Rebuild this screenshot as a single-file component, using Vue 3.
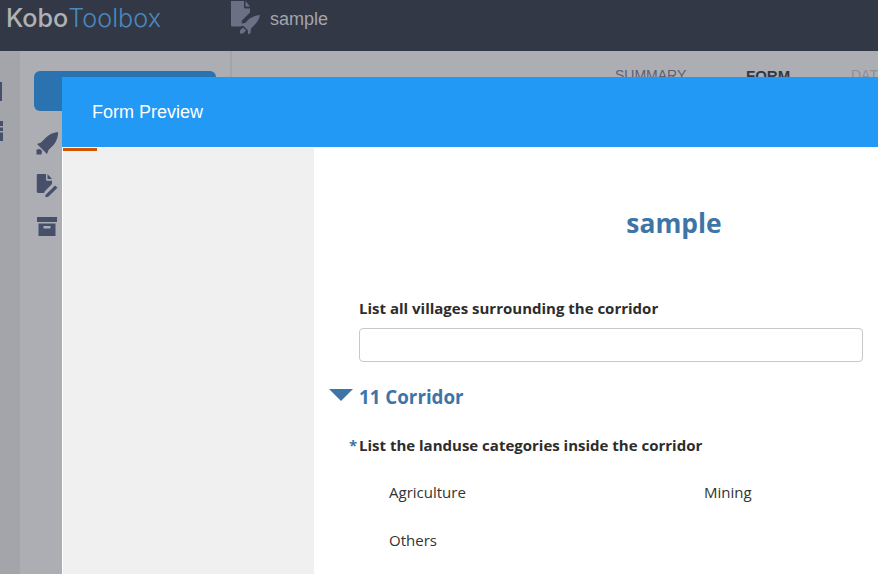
<script setup>
const sideIcons = ['rocket', 'draft', 'archive']
const options = [['Agriculture', 'Mining'], ['Others']]
</script>

<template>
  <div class="page">
    <header class="topbar">
      <div class="logo"><span class="kobo">Kobo</span><span class="toolbox">Toolbox</span></div>
      <div class="asset">
        <svg class="asset-icon" width="32" height="36" viewBox="0 0 32 36">
          <path d="M1 0h13v6c0 1 .6 1.600 1.600 1.600H20v4l-8 8-1 6H2.600C1.500 25.600 1 25 1 24z" fill="#6b7085" />
          <path d="M15.500 0 20 5.500h-4.500z" fill="#6b7085" />
          <path d="M30 14c-5 .5-9 2-12 5l-3 3-4 .5-1.500 2.500h4l4.500 4.500v4l2.500-1.500.5-4.500 3.500-3.500c3-3 4.500-5.500 5.500-10z" fill="#6b7085" />
          <path d="M10 29.500l3-3 3 3-3 3h-3z" fill="#6b7085" />
        </svg>
        <span class="asset-name">sample</span>
      </div>
    </header>

    <div class="behind">
      <aside class="rail">
        <span class="rail-mark first"></span>
        <svg class="rail-list" width="3" height="20" viewBox="0 0 3 20">
          <path d="M0 0h3v20H0zM0 5h3v1.500H0zM0 10h3v1.500H0z" fill="#47506b" fill-rule="evenodd" />
        </svg>
      </aside>
      <aside class="side">
        <div class="new-btn"></div>
        <svg class="side-icon" v-for="icon in sideIcons" :key="icon" width="24" height="24" viewBox="0 0 24 24">
          <template v-if="icon === 'rocket'">
            <path d="M23 1c-5 .6-9 2.500-12 5.500L6 11.500 2 13l3 3 4 4 3 3 1.500-4 5-5c3-3 4.900-9 4.500-13z" fill="#47506b" />
            <path d="M1.500 18.500 5 18l2 2-.5 3.500h-5z" fill="#47506b" />
          </template>
          <template v-else-if="icon === 'draft'">
            <path d="M2 1h9v5.500c0 .8.500 1.200 1.200 1.200H17V11l-7 7-1 2H3c-.7 0-1.200-.5-1.200-1.200V2C1.800 1.400 2.300 1 3 1z M12.500 1 17 6h-4.500z" fill="#47506b" />
            <path d="M20 12.500l2.500 2.300L13 24l-3 .8.700-3z" fill="#47506b" />
          </template>
          <template v-else>
            <path d="M2 2h20v5H2zM3.500 8.500h17V21h-17zM8.500 11v2.500h7V11z" fill="#47506b" fill-rule="evenodd" />
          </template>
        </svg>
      </aside>
      <main class="tabs">
        <span class="tab t1">SUMMARY</span>
        <span class="tab t2">FORM</span>
        <span class="tab t3">DATA</span>
      </main>
    </div>

    <section class="modal">
      <div class="modal-head">Form Preview</div>
      <div class="modal-body">
        <div class="nav-pane"><div class="progress"></div></div>
        <form class="form" @submit.prevent>
          <h1 class="form-title">sample</h1>
          <label class="q-label">List all villages surrounding the corridor</label>
          <input class="q-input" type="text" />
          <h2 class="group"><span class="caret"></span>11 Corridor</h2>
          <div class="q-label req"><span class="star">*</span>List the landuse categories inside the corridor</div>
          <div class="opts">
            <div class="opt-row" v-for="(row, i) in options" :key="i">
              <span class="opt" v-for="o in row" :key="o">{{ o }}</span>
            </div>
          </div>
        </form>
      </div>
    </section>
  </div>
</template>

<style>
html, body { margin: 0; overflow: hidden; }
</style>

<style scoped>
.page {
  position: relative;
  width: 878px;
  height: 574px;
  overflow: hidden;
  background: #adaeb3;
  font-family: "Liberation Sans", Arial, sans-serif;
}
.topbar {
  height: 51px;
  background: #333846;
  display: flex;
  align-items: center;
  padding-left: 6px;
  box-sizing: border-box;
}
.logo {
  width: 224px;
  flex: none;
  font-family: Inter, sans-serif;
  font-size: 25.200px;
  font-weight: 300;
  margin-top: -15px;
}
.kobo { color: #b0b1b5; font-weight: 500; }
.toolbox { color: #4a88bd; }
.asset { display: flex; align-items: center; height: 51px; margin-top: -12px; }
.asset-icon { margin-right: 8px; margin-top: -2px; }
.asset-name { color: #a3a5ac; font-size: 18px; }
.behind { display: flex; height: 523px; }
.rail {
  width: 20px;
  flex: none;
  background: #a3a5ab;
  position: relative;
}
.rail-mark { position: absolute; left: 0; width: 2px; background: #47506b; }
.first { top: 31px; height: 19px; }
.rail-list { position: absolute; left: 0; top: 70px; }
.side {
  width: 212px;
  padding: 20px 14px 0;
  box-sizing: border-box;
  border-right: 2px solid #a3a4aa;
  display: flex;
  flex-direction: column;
  align-items: flex-start;
  flex: none;
}
.new-btn {
  width: 182px;
  height: 40px;
  flex: none;
  background: #2a72b0;
  border-radius: 6px;
  margin-bottom: 20px;
}
.side-icon { margin: 0 0 18px 1px; flex: none; }
.tabs {
  flex: 1;
  display: flex;
  padding-top: 16px;
  font-size: 14px;
  white-space: nowrap;
}
.tab { flex: none; }
.t1 { margin-left: 383px; width: 131px; color: #5d6070; }
.t2 { width: 105px; color: #333846; font-weight: 700; font-size: 15px; }
.t3 { color: #8e9098; }
.modal {
  position: absolute;
  left: 62px;
  top: 77px;
  width: 816px;
  height: 497px;
  background: #fff;
}
.modal-head {
  height: 70px;
  background: #2299f5;
  color: #fff;
  font-size: 18px;
  line-height: 70px;
  padding-left: 30px;
}
.modal-body { display: flex; height: 427px; padding-left: 1px; }
.nav-pane {
  width: 251px;
  margin-top: 1px;
  background: #f0f0f0;
  flex: none;
}
.progress { width: 34px; height: 3px; background: #d25400; }
.form {
  flex: 1;
  padding-left: 45px;
  font-family: "Open Sans", sans-serif;
  color: #2c2c2c;
  min-width: 0;
}
.form-title {
  margin: 59px 0 0;
  width: 630px;
  text-align: center;
  color: #3e74a6;
  font-size: 26.400px;
  line-height: 34px;
  font-weight: 700;
}
.q-label { font-size: 15px; font-weight: 700; line-height: 20px; }
.form-title + .q-label { display: block; margin-top: 58px; }
.q-input {
  display: block;
  width: 504px;
  height: 34px;
  margin-top: 10px;
  box-sizing: border-box;
  border: 1px solid #c8c8c8;
  border-radius: 4px;
  background: #fff;
}
.group {
  position: relative;
  margin: 22px 0 0;
  color: #3e74a6;
  font-size: 18.750px;
  line-height: 26px;
  font-weight: 700;
}
.caret {
  position: absolute;
  left: -30px;
  top: 5px;
  border-left: 12px solid transparent;
  border-right: 12px solid transparent;
  border-top: 12px solid #3e74a6;
}
.req { position: relative; margin-top: 25px; }
.star { position: absolute; left: -10px; color: #3e74a6; }
.opts { padding: 0 0 0 30px; margin-top: 27px; font-size: 15px; color: #333; }
.opt-row { display: flex; height: 48px; line-height: 20px; }
.opt { width: 315px; flex: none; }
</style>
